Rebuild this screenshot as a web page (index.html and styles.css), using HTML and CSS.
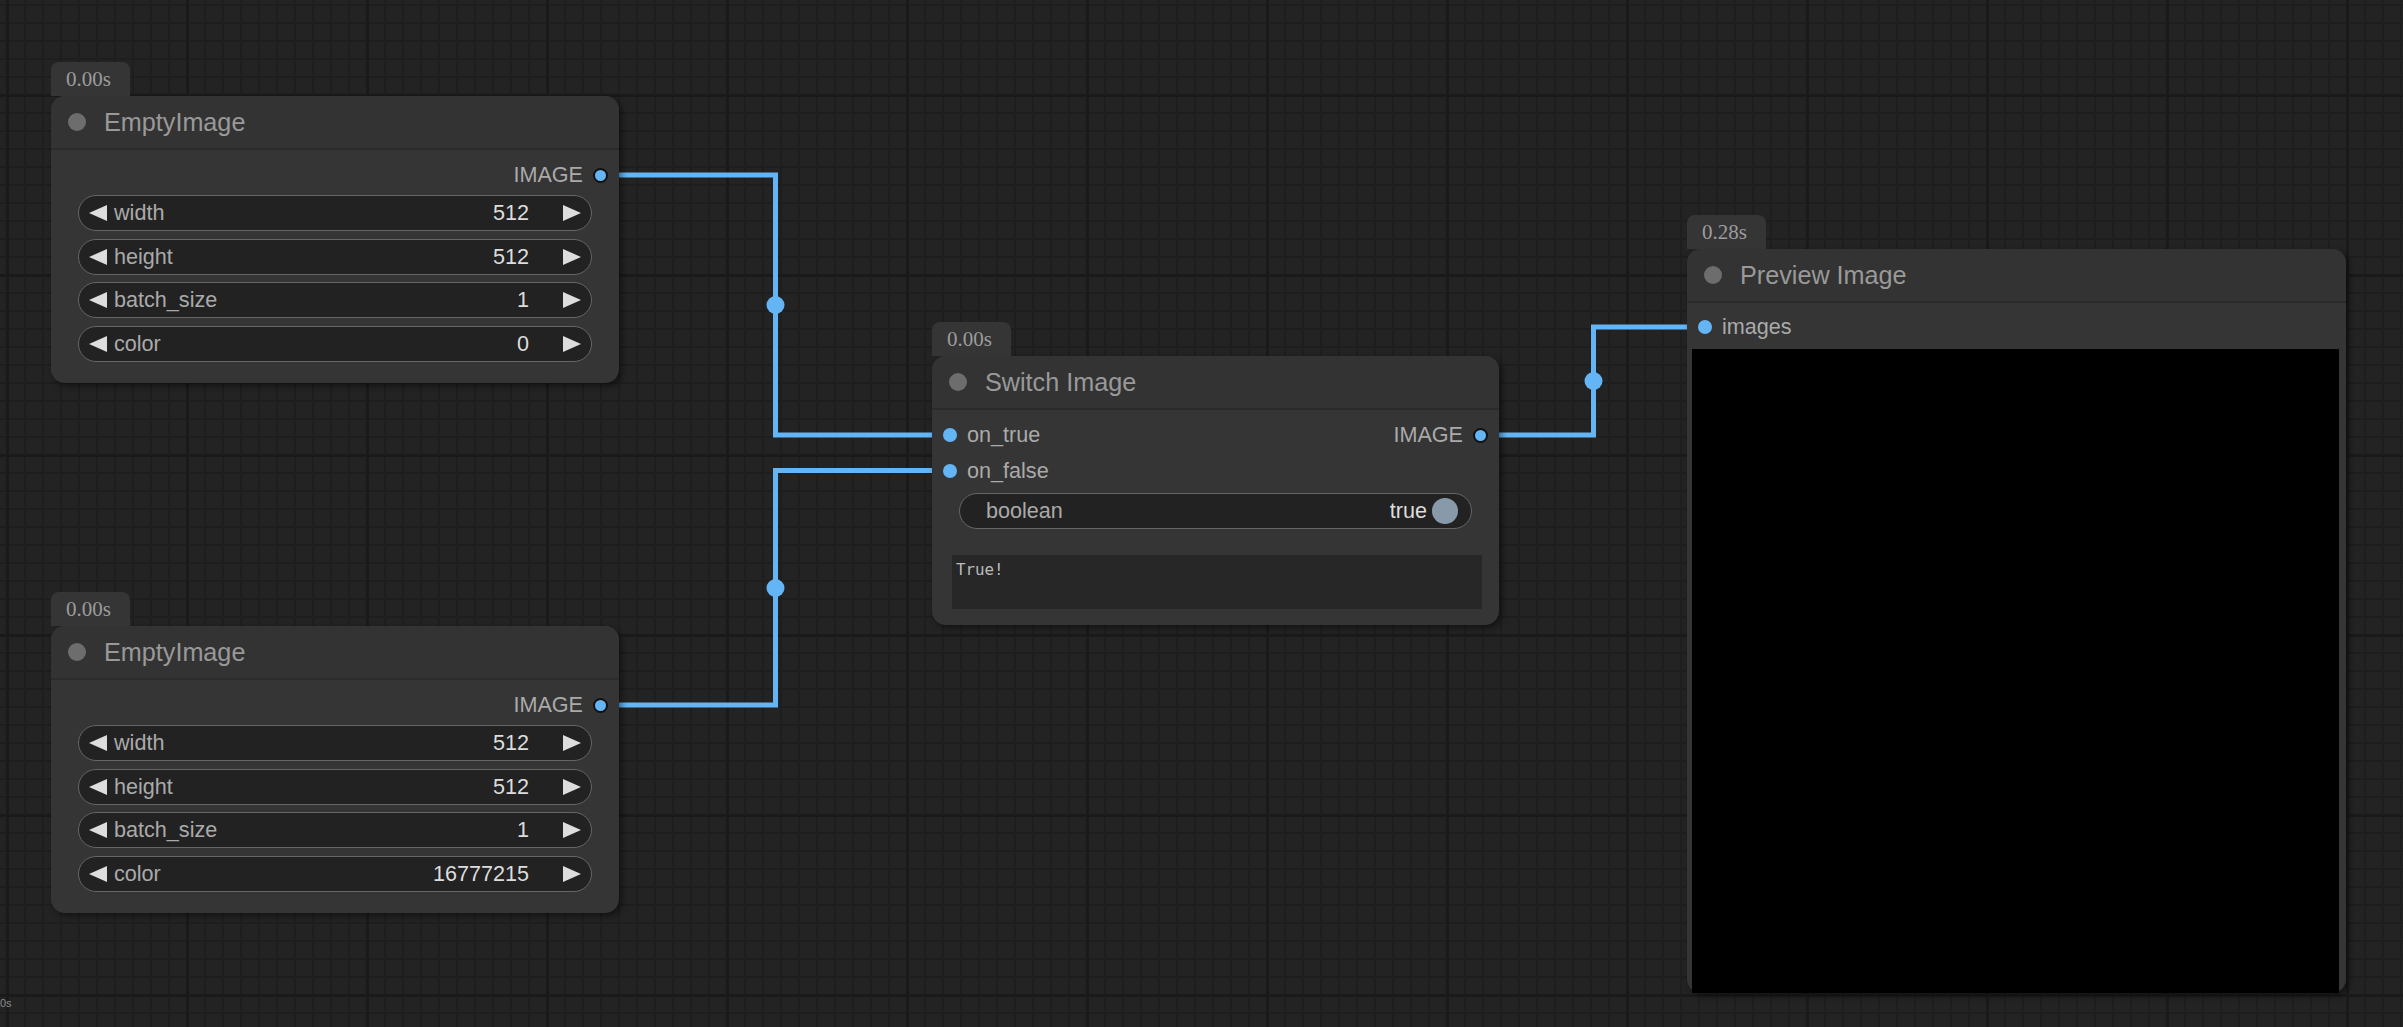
FILE: index.html
```html
<!DOCTYPE html>
<html>
<head>
<meta charset="utf-8">
<title>ComfyUI graph</title>
<link rel="stylesheet" href="styles.css">
</head>
<body>
<div class="canvas">
  <svg class="links" width="2403" height="1027" viewBox="0 0 2403 1027">
    <path d="M601 175 H775.5 V435 H950" />
    <path d="M601 705 H775.5 V470.5 H950" />
    <path d="M1480 435 H1593.5 V327 H1704" />
    <circle cx="775.5" cy="305" r="9" />
    <circle cx="775.5" cy="588" r="9" />
    <circle cx="1593.5" cy="381" r="9" />
  </svg>

  <div class="node node-empty-a">
    <div class="badge">0.00s</div>
    <div class="title"><span class="title-dot"></span><span class="title-text">EmptyImage</span></div>
    <div class="body">
      <div class="slot-row out-row"><span class="slot-label out-label">IMAGE</span><span class="dot dot-out"></span></div>
      <div class="widgets">
        <div class="num"><span class="arrow arrow-l"></span><span class="w-label">width</span><span class="w-value">512</span><span class="arrow arrow-r"></span></div>
        <div class="num"><span class="arrow arrow-l"></span><span class="w-label">height</span><span class="w-value">512</span><span class="arrow arrow-r"></span></div>
        <div class="num"><span class="arrow arrow-l"></span><span class="w-label">batch_size</span><span class="w-value">1</span><span class="arrow arrow-r"></span></div>
        <div class="num"><span class="arrow arrow-l"></span><span class="w-label">color</span><span class="w-value">0</span><span class="arrow arrow-r"></span></div>
      </div>
    </div>
  </div>

  <div class="node node-empty-b">
    <div class="badge">0.00s</div>
    <div class="title"><span class="title-dot"></span><span class="title-text">EmptyImage</span></div>
    <div class="body">
      <div class="slot-row out-row"><span class="slot-label out-label">IMAGE</span><span class="dot dot-out"></span></div>
      <div class="widgets">
        <div class="num"><span class="arrow arrow-l"></span><span class="w-label">width</span><span class="w-value">512</span><span class="arrow arrow-r"></span></div>
        <div class="num"><span class="arrow arrow-l"></span><span class="w-label">height</span><span class="w-value">512</span><span class="arrow arrow-r"></span></div>
        <div class="num"><span class="arrow arrow-l"></span><span class="w-label">batch_size</span><span class="w-value">1</span><span class="arrow arrow-r"></span></div>
        <div class="num"><span class="arrow arrow-l"></span><span class="w-label">color</span><span class="w-value">16777215</span><span class="arrow arrow-r"></span></div>
      </div>
    </div>
  </div>

  <div class="node node-switch">
    <div class="badge">0.00s</div>
    <div class="title"><span class="title-dot"></span><span class="title-text">Switch Image</span></div>
    <div class="body">
      <div class="slot-row">
        <span class="dot dot-in"></span><span class="slot-label in-label">on_true</span>
        <span class="spacer"></span>
        <span class="slot-label out-label">IMAGE</span><span class="dot dot-out"></span>
      </div>
      <div class="slot-row">
        <span class="dot dot-in"></span><span class="slot-label in-label">on_false</span>
      </div>
      <div class="toggle">
        <span class="w-label">boolean</span>
        <span class="w-value">true</span>
        <span class="knob"></span>
      </div>
      <div class="textbox">True!</div>
    </div>
  </div>

  <div class="node node-preview">
    <div class="badge">0.28s</div>
    <div class="title"><span class="title-dot"></span><span class="title-text">Preview Image</span></div>
    <div class="body">
      <div class="slot-row">
        <span class="dot dot-in"></span><span class="slot-label in-label">images</span>
      </div>
      <div class="preview-img"></div>
    </div>
  </div>

  <div class="render-info">0s</div>
</div>
</body>
</html>
```

FILE: styles.css
```css
html, body {
  margin: 0;
  padding: 0;
  background: #232323;
  overflow: hidden;
}

.canvas {
  position: relative;
  width: 2403px;
  height: 1027px;
  overflow: hidden;
  font-family: "Liberation Sans", Arial, sans-serif;
  background-color: #232323;
  background-image:
    linear-gradient(90deg, #1a1a1a 3px, transparent 3px),
    linear-gradient(180deg, #1a1a1a 3px, transparent 3px),
    linear-gradient(90deg, #1e1e1e 2px, transparent 2px),
    linear-gradient(180deg, #1e1e1e 2px, transparent 2px);
  background-size: 180px 180px, 180px 180px, 18px 18px, 18px 18px;
  background-position: 6px 94px, 6px 94px, 6px 4px, 6px 4px;
}

.links {
  position: absolute;
  left: 0;
  top: 0;
}

.links path {
  fill: none;
  stroke: #64b5f6;
  stroke-width: 5;
  stroke-linejoin: miter;
}

.links circle {
  fill: #64b5f6;
}

/* ---------- nodes ---------- */
.node {
  position: absolute;
  background: #353535;
  border-radius: 14px;
  box-shadow: 3px 3px 6px rgba(0, 0, 0, 0.45);
}

.node-empty-a { left: 51px; top: 96px; width: 568px; }
.node-empty-b { left: 51px; top: 626px; width: 568px; }
.node-switch  { left: 932px; top: 356px; width: 567px; }
.node-preview { left: 1687px; top: 249px; width: 659px; }

.badge {
  position: absolute;
  left: 0;
  bottom: 100%;
  width: 79px;
  height: 34px;
  box-sizing: border-box;
  padding-left: 15px;
  background: #353535;
  border-radius: 8px 8px 0 0;
  font-family: "Liberation Serif", "Times New Roman", serif;
  font-size: 21px;
  line-height: 34px;
  color: #9c9c9c;
}

.title {
  height: 54px;
  box-sizing: border-box;
  display: flex;
  align-items: center;
  padding-left: 17px;
  background: #333333;
  border-radius: 14px 14px 0 0;
  border-bottom: 2px solid #2b2b2b;
}

.title-dot {
  width: 18px;
  height: 18px;
  border-radius: 50%;
  background: #6d6d6d;
  flex: none;
}

.title-text {
  margin-left: 18px;
  font-size: 25.2px;
  color: #999999;
  white-space: nowrap;
}

.body {
  padding-top: 7px;
}

.node-preview .body {
  padding-top: 6px;
}

.slot-row {
  height: 36px;
  display: flex;
  align-items: center;
  padding: 0 11px;
}

.out-row {
  justify-content: flex-end;
}

.spacer {
  flex: 1;
}

.slot-label {
  font-size: 21.6px;
  color: #aaaaaa;
  white-space: nowrap;
}

.in-label {
  margin-left: 10px;
}

.out-label {
  margin-right: 10px;
}

.dot {
  width: 14px;
  height: 14px;
  border-radius: 50%;
  background: #64b5f6;
  box-sizing: border-box;
  flex: none;
}

.dot-out {
  width: 15px;
  height: 15px;
  border: 2px solid #111111;
}

/* ---------- widgets ---------- */
.widgets {
  display: flex;
  flex-direction: column;
  gap: 7.5px;
  padding: 2px 27px 21px;
}

.num,
.toggle {
  height: 36px;
  box-sizing: border-box;
  display: flex;
  align-items: center;
  background: #222222;
  border: 1.5px solid #666666;
  border-radius: 18px;
  font-size: 21.6px;
  white-space: nowrap;
}

.num {
  padding: 0 10px;
}

.w-label {
  flex: 1;
  color: #aaaaaa;
}

.w-value {
  color: #dddddd;
}

.num .w-label {
  margin-left: 7px;
}

.arrow {
  width: 0;
  height: 0;
  border-top: 8.5px solid transparent;
  border-bottom: 8.5px solid transparent;
  flex: none;
}

.arrow-l {
  border-right: 18px solid #dddddd;
}

.arrow-r {
  border-left: 18px solid #dddddd;
  margin-left: 34px;
}

.toggle {
  margin: 4px 27px 0;
  padding: 0 13px 0 26px;
}

.knob {
  width: 26px;
  height: 26px;
  border-radius: 50%;
  background: #8899aa;
  margin-left: 5px;
  flex: none;
}

.textbox {
  margin: 26px 17px 16px 20px;
  height: 54px;
  box-sizing: border-box;
  padding: 5px 4px;
  background: #272727;
  font-family: "DejaVu Sans Mono", "Liberation Mono", monospace;
  font-size: 15.8px;
  color: #bbbbbb;
}

.preview-img {
  margin: 4px 7px 0 5px;
  height: 644px;
  background: #000000;
}

.render-info {
  position: absolute;
  left: 0;
  top: 997px;
  font-family: "Liberation Sans", Arial, sans-serif;
  font-size: 11px;
  color: #8a8a8a;
}
```
